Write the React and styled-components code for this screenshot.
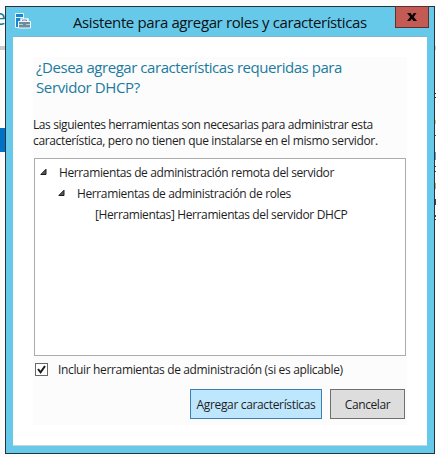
import React from "react";
import styled, { createGlobalStyle } from "styled-components";

const Global = createGlobalStyle`
  * { box-sizing: border-box; }
  body { margin: 0; background: #fcfcfc; overflow: hidden; }
`;

const Desktop = styled.div`
  position: relative;
  width: 436px;
  height: 457px;
  padding: 6px 1px 3px 5px;
  overflow: hidden;
  background: #fcfcfc;
  color: #1e1e1e;
  font: 12px/16px "Open Sans", "Noto Sans", sans-serif;
`;

const Behind = styled.div`
  position: absolute;
  left: ${(p) => p.$x}px;
  top: ${(p) => p.$y}px;
  width: ${(p) => p.$w}px;
  height: ${(p) => p.$h}px;
  background: ${(p) => p.$color};
`;

const BehindLetter = styled.div`
  position: absolute;
  left: -6px;
  top: 0;
  color: #1b7b9e;
  font-size: 21px;
  line-height: 34px;
`;

const Window = styled.section`
  position: relative;
  display: flex;
  flex-direction: column;
  width: 430px;
  height: 448px;
  border: 1px solid #25333a;
  background: #66c9ea;
  padding: 0 7px 7px;
`;

const TitleBar = styled.header`
  display: flex;
  flex: none;
  height: 29px;
  margin-right: -2px;
`;

const AppIcon = styled.svg`
  flex: none;
  width: 18px;
  height: 18px;
  margin: 5px 0 0 1px;
`;

const Title = styled.h1`
  flex: 1;
  margin: 0 0 0 41px;
  color: #0c1114;
  font-size: 15px;
  font-weight: 400;
  line-height: 30px;
`;

const CloseButton = styled.button`
  flex: none;
  display: flex;
  align-items: center;
  justify-content: center;
  width: 34px;
  height: 22px;
  margin-top: -1px;
  padding: 0;
  border: 1px solid #59312f;
  background: #c35a53;
`;

const Body = styled.main`
  flex: 1;
  padding: 20px;
  border-top: 1px solid #82b4cc;
  border-bottom: 1px solid #c6d6dd;
  background: #fff;
`;

const Panel = styled.div`
  width: 374px;
  height: 368px;
  background: #fcfcfc;
`;

const Heading = styled.h2`
  margin: 0;
  padding-left: 3px;
  color: #1b7b9e;
  font-size: 15px;
  font-weight: 400;
  line-height: 20px;
`;

const Description = styled.div`
  margin-top: 20px;
  height: 41px;
`;

const Line = styled.span`
  display: block;
  width: max-content;
  white-space: nowrap;
  letter-spacing: ${(p) => p.$track}px;
`;

const Tree = styled.div`
  width: 372px;
  height: 198px;
  margin-left: 1px;
  padding-top: 2px;
  border: 1px solid #acacac;
  background: #fff;
`;

const TreeRow = styled.div`
  display: flex;
  align-items: center;
  height: 21px;
  padding-left: ${(p) => p.$indent}px;
`;

const RowLabel = styled(Line)`
  padding-top: 2px;
`;

const Arrow = styled.svg`
  flex: none;
  width: 8px;
  height: 8px;
  margin-right: 11px;
`;

const CheckRow = styled.label`
  display: flex;
  align-items: center;
  gap: 10px;
  height: 27px;
  padding-left: 2px;
`;

const CheckBox = styled.span`
  width: 13px;
  height: 13px;
  border: 1px solid #686868;
  background: #fff;
  display: flex;
`;

const Buttons = styled.footer`
  display: flex;
  justify-content: flex-end;
  gap: 8px;
  margin: 6px 2px 0 0;
`;

const Button = styled.button`
  display: flex;
  align-items: center;
  justify-content: center;
  width: ${(p) => p.$width}px;
  height: 30px;
  padding: 2px 0 0;
  border: 1px solid ${(p) => (p.$primary ? "#3c7fb1" : "#707070")};
  background: ${(p) => (p.$primary ? "#bee6fd" : "#dddddd")};
  color: #1e1e1e;
  font: inherit;
`;

const fragments = [
  [0, 46, 5, 4, "#cbcbcb"],
  [0, 128, 5, 24, "#0072c6"],
  [435, 46, 1, 4, "#cbcbcb"],
  [435, 93, 1, 1, "#333333"],
  [435, 97, 1, 1, "#333333"],
  [435, 120, 1, 4, "#d9c48c"],
  [435, 135, 1, 1, "#555555"],
  [435, 152, 1, 8, "#6a9cc4"],
  [435, 166, 1, 1, "#454545"],
  [435, 171, 1, 1, "#454545"],
  [435, 183, 1, 6, "#c9a27c"],
  [435, 199, 1, 6, "#403a66"],
  [435, 215, 1, 2, "#444444"],
  [435, 219, 1, 1, "#444444"],
];

const rows = [
  { text: "Herramientas de administración remota del servidor", indent: 5, open: true },
  { text: "Herramientas de administración de roles", indent: 23, open: true },
  { text: "[Herramientas] Herramientas del servidor DHCP", indent: 60, open: false },
];

export default function App() {
  return (
    <Desktop>
      <Global />
      <BehindLetter>e</BehindLetter>
      {fragments.map(([x, y, w, h, color]) => (
        <Behind key={`${x}-${y}`} $x={x} $y={y} $w={w} $h={h} $color={color} />
      ))}
      <Window>
        <TitleBar>
          <AppIcon viewBox="0 0 18 18">
            <path d="M1.5 1.5h8v14h-8z" fill="#1688d0" stroke="#e9f7fc" />
            <path d="M2 5.5h7" stroke="#e9f7fc" />
            <path d="M7.5 9.5V7.5h6v2" fill="none" stroke="#f1f8fb" strokeWidth="2.4" />
            <path d="M8.5 9V8h4v1" fill="none" stroke="#708b9d" />
            <path d="M4.5 9.5h12v6.5h-12z" fill="#708b9d" stroke="#f1f8fb" />
            <path d="M5 12.5h4m3 0h4" stroke="#b7cad5" />
          </AppIcon>
          <Title>
            <Line $track={-0.38}>Asistente para agregar roles y características</Line>
          </Title>
          <CloseButton aria-label="Cerrar">
            <svg width="10" height="8" viewBox="0 0 10 8">
              <path d="M0 0h3.6l1.6 2.3L6.8 0h2.7L6.7 4 10 8H6.4L4.8 5.7 3.2 8H0l3.2-4z" fill="#080606" />
            </svg>
          </CloseButton>
        </TitleBar>
        <Body>
          <Panel>
            <Heading>
              <Line $track={-0.45}>¿Desea agregar características requeridas para</Line>
              <Line $track={-0.38}>Servidor DHCP?</Line>
            </Heading>
            <Description>
              <Line $track={-0.41}>Las siguientes herramientas son necesarias para administrar esta</Line>
              <Line $track={-0.35}>característica, pero no tienen que instalarse en el mismo servidor.</Line>
            </Description>
            <Tree>
              {rows.map((row) => (
                <TreeRow key={row.text} $indent={row.indent}>
                  {row.open && (
                    <Arrow viewBox="0 0 8 8">
                      <path d="M6 1.2V6.5H.8z" fill="#595959" stroke="#1c1c1c" />
                    </Arrow>
                  )}
                  <RowLabel $track={-0.38}>{row.text}</RowLabel>
                </TreeRow>
              ))}
            </Tree>
            <CheckRow>
              <CheckBox>
                <svg width="11" height="11" viewBox="0 0 11 11">
                  <path d="M2 5l2.6 3.4L9 2" fill="none" stroke="#1c1c1c" strokeWidth="2" />
                </svg>
              </CheckBox>
              <Line $track={-0.35}>Incluir herramientas de administración (si es aplicable)</Line>
            </CheckRow>
            <Buttons>
              <Button $primary $width={132}>
                <Line $track={-0.34}>Agregar características</Line>
              </Button>
              <Button $width={75}>
                <Line $track={-0.4}>Cancelar</Line>
              </Button>
            </Buttons>
          </Panel>
        </Body>
      </Window>
    </Desktop>
  );
}
